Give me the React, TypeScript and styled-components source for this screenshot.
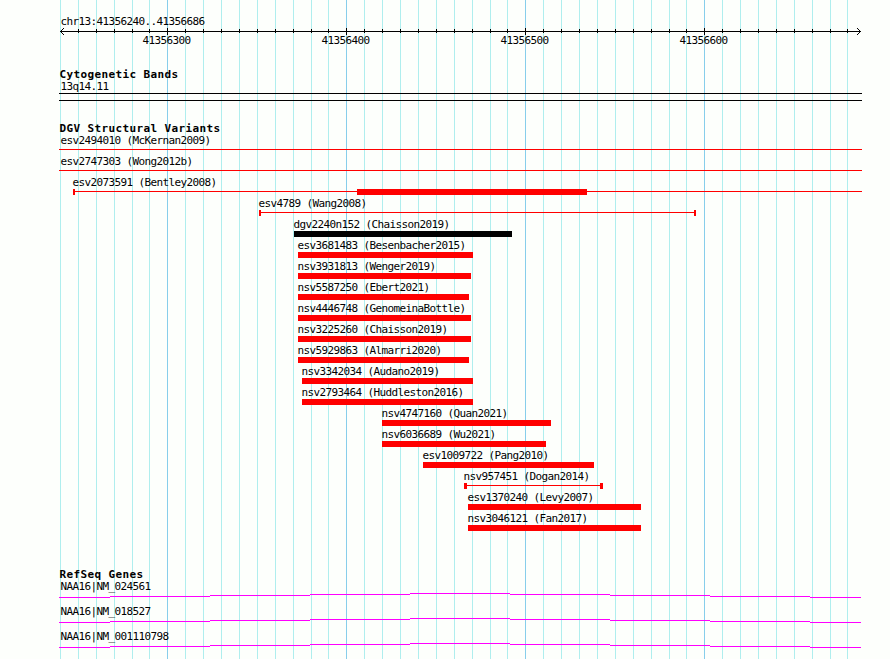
import React from "react";
import styled, { createGlobalStyle } from "styled-components";

const GRID = [
  60, 78, 96, 114, 132, 149, 167, 185, 203, 221, 239, 257, 275, 293, 311, 328,
  346, 364, 382, 400, 418, 436, 454, 472, 490, 507, 525, 543, 561, 579, 597,
  615, 633, 651, 669, 686, 704, 722, 740, 758, 776, 794, 812, 830, 847,
];
const MAJOR = [167, 346, 525, 704];
const MAJOR_LABELS = ["41356300", "41356400", "41356500", "41356600"];

type Variant = {
  name: string;
  start: number;
  end: number;
  kind: "line" | "bar" | "whisker";
  cap?: number;
  label?: number;
  black?: boolean;
};

const VARIANTS: Variant[] = [
  { name: "esv2494010 (McKernan2009)", start: 59, end: 862, kind: "line", label: 60 },
  { name: "esv2747303 (Wong2012b)", start: 59, end: 862, kind: "line", label: 60 },
  { name: "esv2073591 (Bentley2008)", start: 73, end: 862, kind: "line", cap: 2, label: 72 },
  { name: "esv4789 (Wang2008)", start: 259, end: 696, kind: "whisker", cap: 2, label: 258 },
  { name: "dgv2240n152 (Chaisson2019)", start: 294, end: 512, kind: "bar", black: true },
  { name: "esv3681483 (Besenbacher2015)", start: 298, end: 473, kind: "bar" },
  { name: "nsv3931813 (Wenger2019)", start: 298, end: 471, kind: "bar" },
  { name: "nsv5587250 (Ebert2021)", start: 298, end: 469, kind: "bar" },
  { name: "nsv4446748 (GenomeinaBottle)", start: 298, end: 471, kind: "bar" },
  { name: "nsv3225260 (Chaisson2019)", start: 298, end: 471, kind: "bar" },
  { name: "nsv5929863 (Almarri2020)", start: 298, end: 469, kind: "bar" },
  { name: "nsv3342034 (Audano2019)", start: 302, end: 473, kind: "bar" },
  { name: "nsv2793464 (Huddleston2016)", start: 302, end: 473, kind: "bar" },
  { name: "nsv4747160 (Quan2021)", start: 382, end: 551, kind: "bar" },
  { name: "nsv6036689 (Wu2021)", start: 382, end: 546, kind: "bar" },
  { name: "esv1009722 (Pang2010)", start: 423, end: 594, kind: "bar" },
  { name: "nsv957451 (Dogan2014)", start: 464, end: 603, kind: "whisker", cap: 3 },
  { name: "esv1370240 (Levy2007)", start: 468, end: 641, kind: "bar" },
  { name: "nsv3046121 (Fan2017)", start: 468, end: 641, kind: "bar" },
];

const GENES = ["NAA16|NM_024561", "NAA16|NM_018527", "NAA16|NM_001110798"];
const GENE_STEPS = [
  [59, 110, 4], [110, 210, 3], [210, 310, 2], [310, 410, 1], [410, 510, 0],
  [510, 610, 1], [610, 710, 2], [710, 810, 3], [810, 861, 4],
];

const GlobalStyle = createGlobalStyle`
  body { margin: 0; background: #fdfffc; }
`;

const Browser = styled.main`
  position: relative;
  width: 890px;
  height: 659px;
  overflow: hidden;
  box-sizing: border-box;
  padding-top: 15px;
  background: #fdfffc;
  color: #000;
  font: 11px/13px "DejaVu Sans Mono", monospace;
  letter-spacing: -0.622px;
`;

const GridLayer = styled.svg`
  position: absolute;
  inset: 0;
  shape-rendering: crispEdges;
`;

const Content = styled.div`
  position: relative;
  display: flex;
  flex-direction: column;
`;

const Track = styled.section<{ $gap: number }>`
  display: flex;
  flex-direction: column;
  margin-top: ${(p) => p.$gap}px;
`;

const Title = styled.h2`
  margin: 0;
  height: 12px;
  padding-left: 59.6px;
  font-size: 11px;
  line-height: 13px;
  font-weight: 700;
  letter-spacing: 0.378px;
`;

const Label = styled.div<{ $x: number }>`
  height: 13px;
  padding-left: ${(p) => p.$x + 0.5}px;
  white-space: pre;
`;

const Drawing = styled.svg`
  display: block;
  overflow: visible;
  shape-rendering: crispEdges;
`;

const ScaleLabels = styled.div`
  display: flex;
  height: 13px;
  padding-left: 77px;
`;

const ScaleLabel = styled.span`
  width: 179px;
  text-align: center;
`;

const Band = styled.div`
  box-sizing: border-box;
  width: 803px;
  height: 8px;
  margin-left: 59px;
  border: solid #000;
  border-width: 1px 0;
`;

const VariantRow = styled.div`
  height: 21px;
`;

const Shape = styled.div<{ $start: number; $end: number }>`
  display: flex;
  align-items: center;
  width: ${(p) => p.$end - p.$start}px;
  height: 6px;
  margin-left: ${(p) => p.$start}px;
`;

const Fill = styled.div<{ $width?: number; $color?: string }>`
  flex: ${(p) => (p.$width ? `0 0 ${p.$width}px` : "1")};
  height: 6px;
  background: ${(p) => p.$color ?? "#f00"};
`;

const Thin = styled.div<{ $width?: number }>`
  flex: ${(p) => (p.$width ? `0 0 ${p.$width}px` : "1")};
  align-self: flex-start;
  height: 1px;
  margin-top: 2px;
  background: #f00;
`;

const GeneRow = styled.div`
  height: 25px;
`;

function Grid() {
  return (
    <GridLayer width="890" height="659">
      {GRID.map((x) => (
        <rect key={x} x={x} y="0" width="1" height="659" fill={MAJOR.includes(x) ? "#87ceeb" : "#afeeee"} />
      ))}
    </GridLayer>
  );
}

function Axis() {
  return (
    <Drawing width="890" height="6">
      <rect x="60" y="3" width="801" height="1" />
      {GRID.slice(1).map((x) =>
        MAJOR.includes(x) ? (
          <rect key={x} x={x} y="0" width="1" height="7" />
        ) : (
          <rect key={x} x={x} y="1" width="1" height="4" />
        )
      )}
      {[1, 2, 3].map((d) => (
        <React.Fragment key={d}>
          <rect x={60 + d} y={3 - d} width="1" height="1" />
          <rect x={60 + d} y={3 + d} width="1" height="1" />
          <rect x={860 - d} y={3 - d} width="1" height="1" />
          <rect x={860 - d} y={3 + d} width="1" height="1" />
        </React.Fragment>
      ))}
    </Drawing>
  );
}

function VariantGlyph({ v }: { v: Variant }) {
  if (v.kind === "bar") {
    return (
      <Shape $start={v.start} $end={v.end}>
        <Fill $color={v.black ? "#000" : "#f00"} />
      </Shape>
    );
  }
  if (v.kind === "line" && v.cap) {
    return (
      <Shape $start={v.start} $end={v.end}>
        <Fill $width={v.cap} />
        <Thin $width={282} />
        <Fill $width={230} />
        <Thin />
      </Shape>
    );
  }
  return (
    <Shape $start={v.start} $end={v.end}>
      {v.cap && <Fill $width={v.cap} />}
      <Thin />
      {v.cap && <Fill $width={v.cap} />}
    </Shape>
  );
}

export default function App() {
  return (
    <>
      <GlobalStyle />
      <Browser>
        <Grid />
        <Content>
          <Label $x={60}>chr13:41356240..41356686</Label>
          <Axis />
          <ScaleLabels>
            {MAJOR_LABELS.map((t) => (
              <ScaleLabel key={t}>{t}</ScaleLabel>
            ))}
          </ScaleLabels>
          <Track $gap={21}>
            <Title>Cytogenetic Bands</Title>
            <Label $x={60}>13q14.11</Label>
            <Band />
          </Track>
          <Track $gap={21}>
            <Title>DGV Structural Variants</Title>
            {VARIANTS.map((v) => (
              <VariantRow key={v.name}>
                <Label $x={v.label ?? v.start - 1}>{v.name}</Label>
                <VariantGlyph v={v} />
              </VariantRow>
            ))}
          </Track>
          <Track $gap={35}>
            <Title>RefSeq Genes</Title>
            {GENES.map((g) => (
              <GeneRow key={g}>
                <Label $x={60}>{g}</Label>
                <Drawing width="890" height="5">
                  {GENE_STEPS.map(([a, b, y]) => (
                    <rect key={a} x={a} y={y} width={b - a} height="1" fill="#f0f" />
                  ))}
                </Drawing>
              </GeneRow>
            ))}
          </Track>
        </Content>
      </Browser>
    </>
  );
}
